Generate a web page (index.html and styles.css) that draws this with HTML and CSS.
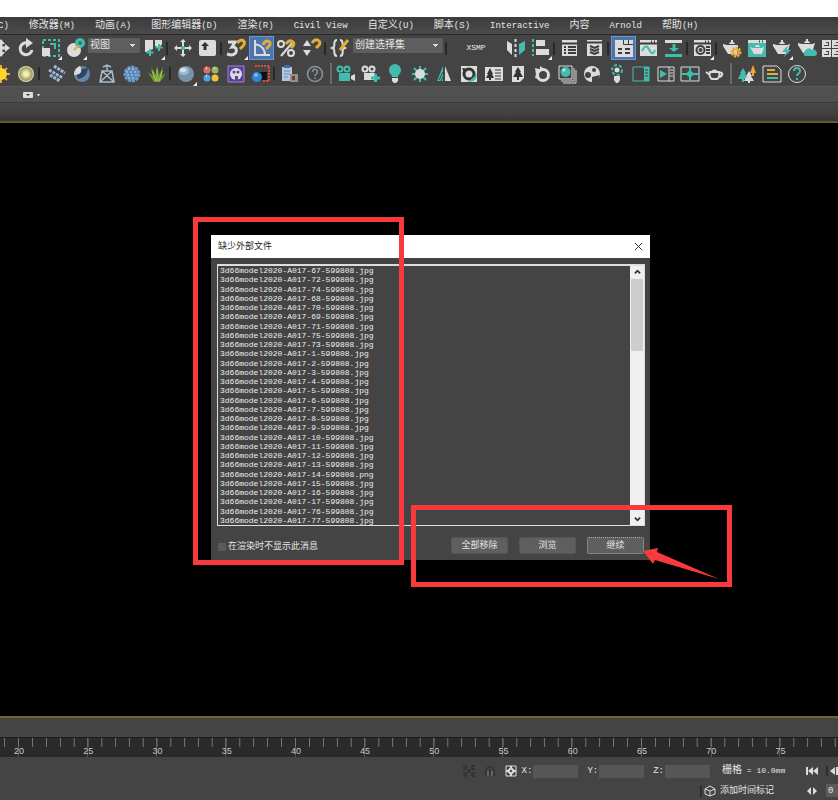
FILE: index.html
```html
<!DOCTYPE html>
<html lang="zh-CN">
<head>
<meta charset="utf-8">
<title>缺少外部文件</title>
<link rel="stylesheet" href="styles.css">
</head>
<body>
<nav class="menubar">
  <a href="#">C)</a>
  <a href="#"><span class="han">修改器</span>(M)</a>
  <a href="#"><span class="han">动画</span>(A)</a>
  <a href="#"><span class="han">图形编辑器</span>(D)</a>
  <a href="#"><span class="han">渲染</span>(R)</a>
  <a href="#">Civil View</a>
  <a href="#"><span class="han">自定义</span>(U)</a>
  <a href="#"><span class="han">脚本</span>(S)</a>
  <a href="#">Interactive</a>
  <a href="#"><span class="han">内容</span></a>
  <a href="#">Arnold</a>
  <a href="#"><span class="han">帮助</span>(H)</a>
</nav>

<div class="toolbar main-tools">
  <button class="tool" aria-label="Move"><svg viewBox="0 0 24 24"><path class="w" d="M12 3l4 5h-2.500v2.500H16V8l5 4-5 4v-2.500h-2.500V16H16l-4 5-4-5h2.500v-2.500H8V16l-5-4 5-4v2.500h2.500V8H8z"/></svg></button>
  <button class="tool" aria-label="Rotate"><svg viewBox="0 0 24 24"><path class="lw thick" d="M14 7a6 6 0 1 0 4 7"/><path class="w" d="M12 2l7 5-7 5z"/></svg></button>
  <button class="tool flyout" aria-label="Scale"><svg viewBox="0 0 24 24"><path class="lt dash" d="M4 4h16v16H4z"/><path class="w" d="M3 12h8v8H3z"/><path class="lt" d="M11 8h5v5"/></svg></button>
  <button class="tool flyout" aria-label="Place"><svg viewBox="0 0 24 24"><circle class="w" cx="10" cy="14" r="7"/><circle class="t" cx="16" cy="7" r="5"/><path class="ly" d="M10 14l5-5"/><circle cx="16" cy="7" r="2" fill="#2c7f78"/></svg></button>
  <select class="combo view" aria-label="Coordinate system"><option>视图</option></select>
  <button class="tool flyout" aria-label="Pivot"><svg viewBox="0 0 24 24"><path class="w" d="M3 4h8v9l-7 3H3zM13 4h7v4l-3 4-4-2z"/><path class="lt" d="M8 13v7M4.500 16.500h7M17 8v7M13.500 11.500h7"/></svg></button>
  <i class="sep"></i>
  <button class="tool" aria-label="Manipulate"><svg viewBox="0 0 24 24"><path class="lw" d="M12 4v16M4 12h16"/><path class="w" d="M9 6l3-3 3 3zM9 18l3 3 3-3zM6 9l-3 3 3 3zM18 9l3 3-3 3z"/><circle class="t" cx="12" cy="12" r="2"/></svg></button>
  <button class="tool" aria-label="Keyboard override"><svg viewBox="0 0 24 24"><rect class="w" x="3" y="4" width="17" height="16" rx="2"/><path d="M9 6l4 4h-2.500v4h-3v-4H5z" fill="#333"/></svg></button>
  <i class="sep"></i>
  <button class="tool flyout" aria-label="Snap"><svg viewBox="0 0 24 24"><path class="lw thick" d="M3 6h7l-3 5c6-1 6 8-1 8l-4-1"/><path class="ly thick" d="M12 7c5-6 10-1 6 3l-3 3"/></svg></button>
  <button class="tool active" aria-label="Angle snap"><svg viewBox="0 0 24 24"><path class="lw" d="M5 4v15h15M5 8c6 1 10 5 10 11"/><path class="ly thick" d="M13 9c3-7 10-3 6 1l-3 3"/></svg></button>
  <button class="tool" aria-label="Percent snap"><svg viewBox="0 0 24 24"><circle class="lw" cx="6" cy="8" r="3"/><circle class="lw" cx="16" cy="17" r="3"/><path class="lw" d="M17 7L6 20"/><path class="ly thick" d="M11 8c4-6 10-2 7 2l-2 2"/></svg></button>
  <button class="tool" aria-label="Spinner snap"><svg viewBox="0 0 24 24"><path class="w" d="M3 10l4-6 4 6zM3 14h8l-4 6z"/><path class="ly thick" d="M12 7c4-6 10-2 7 2l-3 3"/></svg></button>
  <i class="sep"></i>
  <button class="tool" aria-label="Edit named selections"><svg viewBox="0 0 24 24"><path class="lw" d="M8 4c-4 0-2 4-3 7l-2 1 2 1c1 3-1 7 3 7M11 4c4 0 2 4 3 7l2 1-2 1c-1 3 1 7-3 7"/><path class="ly thick" d="M19 4l-8 10"/></svg></button>
  <select class="combo sets" aria-label="Selection set"><option>创建选择集</option></select>
  <i class="sep"></i>
  <button class="xsmp">XSMP</button>
  <button class="tool" aria-label="Mirror"><svg viewBox="0 0 24 24"><path class="w" d="M3 5l5 3v11l-5-5z"/><path class="t" d="M21 5l-6 3v11l6-5z"/><path class="lw dash" d="M11.500 3v18"/></svg></button>
  <button class="tool flyout" aria-label="Align"><svg viewBox="0 0 24 24"><path class="lt dash" d="M4 3v17"/><path class="w" d="M7 4h9v6H7zM7 13h13v6H7z"/></svg></button>
  <i class="sep"></i>
  <button class="tool" aria-label="Layer explorer"><svg viewBox="0 0 24 24"><path class="w" d="M4 4h15v16H4z"/><path class="ld" d="M4 7.500h15M6 11h2m2 0h8M6 14h2m2 0h8M6 17h2m2 0h8"/></svg></button>
  <button class="tool" aria-label="Layers"><svg viewBox="0 0 24 24"><path class="w" d="M4 4h15v16H4z"/><path class="ld" d="M4 6.500h15M7 10l4.500 2 4.500-2M7 13l4.500 2 4.500-2M7 16l4.500 2 4.500-2"/></svg></button>
  <i class="sep"></i>
  <button class="tool active" aria-label="Ribbon"><svg viewBox="0 0 24 24"><path class="w" d="M3 4h18v17H3z"/><path class="ld thin" d="M11.500 4v4.500H21M16.500 4v4"/><path class="ld" d="M6 13h4m3 0h5M6 17h4m3 0h5"/></svg></button>
  <button class="tool" aria-label="Curve editor"><svg viewBox="0 0 24 24"><path class="w" d="M3 4h17v16H3z"/><path class="ld" d="M3 7.500h17M14 5.500h1m2 0h1"/><path class="lt" d="M5 15c4-8 6-4 8 0s4 2 5-1"/></svg></button>
  <button class="tool" aria-label="Schematic view"><svg viewBox="0 0 24 24"><path class="w" d="M3 4h17v3H3z"/><path class="t" d="M3 18h17v3H3zM10.500 8h3v4H17l-5 4-5-4h3.500z"/></svg></button>
  <i class="sep"></i>
  <button class="tool flyout" aria-label="Material editor"><svg viewBox="0 0 24 24"><path class="w" d="M3 4h17v16H3z"/><path class="ld" d="M3 7.500h17M14 5.500h1m2 0h1M15 11h4m-4 3h4m-4 3h4"/><circle class="ld" cx="9.500" cy="14" r="4"/><circle cx="9.500" cy="14" r="2" fill="#444"/></svg></button>
  <i class="sep"></i>
  <button class="tool" aria-label="Render setup"><svg viewBox="0 0 24 24"><path class="w" d="M3 8l4 1h11l-1 9H8l-5-8zM9 8c1-3 5-3 6 0zM11 4h2v2h-2z"/><circle cx="16" cy="16" r="4" fill="none" stroke="#e8ac35" stroke-width="3" stroke-dasharray="2 1"/><circle cx="16" cy="16" r="2.800" fill="none" stroke="#e8ac35" stroke-width="2"/></svg></button>
  <button class="tool" aria-label="Frame window"><svg viewBox="0 0 24 24"><path class="t" d="M3 4h18v17H3z"/><path class="w" d="M3 4h18v3H3zM5 11l3 1h9l2-1-2 7H9zM10 11c1-3 4-3 5 0z"/><path class="ld" d="M14 5.500h1m2 0h1"/></svg></button>
  <button class="tool flyout" aria-label="Render"><svg viewBox="0 0 24 24"><path class="w" d="M3 8l4 1h10l3-1-3 10H8l-5-8zM9 8c1-3 5-3 6 0zM11 4h2v2h-2z"/><path class="t" d="M18 9l-6 7h4l-2 5 7-7h-4z"/></svg></button>
  <button class="tool" aria-label="Cloud render"><svg viewBox="0 0 24 24"><path class="w" d="M3 7l4 1h10l3-1-3 10H8L3 9zM9 7c1-3 5-3 6 0zM11 3h2v2h-2z"/><path class="t" d="M10 20a3 3 0 0 1 0-5 4 4 0 0 1 7-1 3 3 0 0 1 3 6z"/></svg></button>
  <button class="tool" aria-label="Gallery"><svg viewBox="0 0 24 24"><path class="lw" d="M3 5h7v6H3zM13 5h7v6h-7zM3 14h7v6H3zM13 14h7v6h-7zM5 5v3h3M15 5v3h3M5 14v3h3M15 14v3h3"/></svg></button>
</div>

<div class="toolbar extra-tools">
  <button class="tool" aria-label="Sun"><svg viewBox="0 0 24 24"><path class="ly" d="M12 3v18M3 12h18M6 6l12 12M18 6L6 18"/><circle cx="12" cy="12" r="6" fill="#ffd52b"/></svg></button>
  <button class="tool" aria-label="Disc light"><svg viewBox="0 0 24 24"><circle cx="12" cy="12" r="8" fill="#d9d6a1"/><circle cx="12" cy="12" r="7" fill="#a6a36c"/><circle cx="12" cy="12" r="5" fill="#c9c58e"/><circle cx="12" cy="12" r="3" fill="#f1edc0"/></svg></button>
  <i class="sep wide"></i>
  <button class="tool" aria-label="Scatter"><svg viewBox="0 0 24 24"><g fill="none" stroke="#9fb9d8" stroke-width="3" stroke-dasharray="3 1"><path d="M4 8l14 8M9 4l11 7M5 13l10 6"/></g></svg></button>
  <button class="tool" aria-label="Shade"><svg viewBox="0 0 24 24"><circle cx="12" cy="12" r="8" fill="#6487a8"/><path d="M5 8l13-2c-1 7-4 10-10 11z" fill="#30485f"/><path class="w" d="M10 4c3 5 1 9-6 9 0-5 3-8 6-9z"/></svg></button>
  <button class="tool" aria-label="Tower"><svg viewBox="0 0 24 24"><path fill="none" stroke="#a9bccd" stroke-width="1.500" d="M12 3v5M8 5l4-2 4 2M7 9h10l2 11H5zM7 9l12 11M17 9L5 20"/></svg></button>
  <button class="tool" aria-label="Fur"><svg viewBox="0 0 24 24"><circle cx="12" cy="12" r="7" fill="#5b88b9"/><circle cx="12" cy="12" r="7" fill="none" stroke="#6f98c5" stroke-width="3" stroke-dasharray="3 1"/><path fill="none" stroke="#b7d0ea" stroke-dasharray="2 2" d="M8 7h8M6 10h11M7 13h11M8 16h8"/></svg></button>
  <button class="tool" aria-label="Grass"><svg viewBox="0 0 24 24"><path fill="#6f9d35" d="M9 20L3 10l5 4-2-9 5 8 1-10 2 10 4-8-1 9 4-3-6 9z"/><path fill="none" stroke="#a5cd52" d="M11 19L7 9M12 19V7M14 19l3-10"/></svg></button>
  <i class="sep"></i>
  <button class="tool flyout" aria-label="Sphere"><svg viewBox="0 0 24 24"><circle cx="12" cy="12" r="8" fill="#7892a8"/><ellipse cx="10" cy="9" rx="5" ry="4" fill="#a3b8c8"/><ellipse cx="9" cy="8" rx="3" ry="2" fill="#d5e1ea"/></svg></button>
  <button class="tool" aria-label="Colours"><svg viewBox="0 0 24 24"><circle cx="8" cy="8" r="3.500" fill="#e36c64"/><circle cx="16" cy="8" r="3.500" fill="#97b960"/><circle cx="8" cy="16" r="3.500" fill="#4da3e6"/><circle cx="16" cy="16" r="3.500" fill="#f2bf36"/><path class="lw" d="M7 6h1M15 6h1M7 14h1M15 14h1"/></svg></button>
  <button class="tool" aria-label="Palette"><svg viewBox="0 0 24 24"><path fill="#5b3f99" stroke="#9d86d0" d="M4 4h16v16H4z"/><circle class="w" cx="12" cy="12" r="6"/><g fill="#5b3f99"><circle cx="10" cy="10" r="1.500"/><circle cx="14" cy="10" r="1.500"/><path d="M11 14h3v4h-3z"/></g></svg></button>
  <button class="tool" aria-label="Region"><svg viewBox="0 0 24 24"><path fill="none" stroke="#d94b3f" stroke-width="2" stroke-dasharray="2 1" d="M6 4h14v15h-6"/><path fill="#111" d="M9 10h9v8H9z"/><circle cx="8" cy="15" r="5" fill="#2f86d8"/><circle cx="7" cy="13" r="2" fill="#77b6ee"/></svg></button>
  <i class="sep"></i>
  <button class="tool" aria-label="Copy"><svg viewBox="0 0 24 24"><path fill="#b5c7e0" d="M4 5h10v14H4z"/><path fill="#456ba3" d="M6 3h6v3H6z"/><path fill="none" stroke="#6688b6" d="M6 9h6M6 12h6M6 15h4"/><path fill="#a08b84" d="M12 12h8v8h-8z"/><path fill="#5f4843" d="M14 14h3v4h-3z"/></svg></button>
  <button class="tool" aria-label="Help"><svg viewBox="0 0 24 24"><g fill="none" stroke="#8b949c" stroke-width="1.500"><circle cx="12" cy="12" r="7.500"/><path d="M9.500 10c0-4 5-3 5 0 0 2-2.500 2-2.500 4M12 15.500V17"/></g></svg></button>
  <i class="sep light"></i>
  <div class="tool-group">
    <button class="tool" aria-label="Camera"><svg viewBox="0 0 24 24"><circle class="lt" cx="6" cy="7" r="2.500"/><circle class="lt" cx="13" cy="7" r="2.500"/><path class="t" d="M5 11h11v8H5z"/><path class="w" d="M17 14l4-2v7l-4-2z"/></svg></button>
    <button class="tool" aria-label="Add camera"><svg viewBox="0 0 24 24"><circle class="lw" cx="6" cy="7" r="2.500"/><circle class="lw" cx="13" cy="7" r="2.500"/><path class="w" d="M5 11h11v7H5z"/><path class="lt thick" d="M12 16h9M16.500 12v8"/></svg></button>
    <button class="tool" aria-label="Bulb"><svg viewBox="0 0 24 24"><path class="t" d="M9 15c0-3-3-3-3-7a6 6 0 0 1 12 0c0 4-3 4-3 7z"/><path class="w" d="M9 16h6v3l-2 2h-2l-2-2z"/></svg></button>
    <button class="tool" aria-label="Daylight"><svg viewBox="0 0 24 24"><path class="lt" d="M12 4v16M4 12h16M6 6l12 12M18 6L6 18"/><circle class="w" cx="12" cy="12" r="5"/></svg></button>
    <button class="tool" aria-label="Tree mirror"><svg viewBox="0 0 24 24"><path class="t" d="M11 4v15H5z"/><path class="w" d="M13 4l6 15h-6z"/><path class="ld thin" d="M7 18l4-8M9 19l2-4"/></svg></button>
    <button class="tool" aria-label="Ring render"><svg viewBox="0 0 24 24"><path class="w" d="M4 4h16v16H4z"/><circle cx="12" cy="12" r="5" fill="none" stroke="#333" stroke-width="3"/><path fill="#333" d="M5 6l7 1-5 4z"/><path class="t" d="M11 20l9-8c0 5-3 8-9 8z"/></svg></button>
    <button class="tool" aria-label="Tree list"><svg viewBox="0 0 24 24"><path class="w" d="M3 5h18v14H3z"/><path fill="#333" d="M8 6l3 6h-1l2 4H9v2H7v-2H4l2-4H5z"/><path class="ld thin" d="M13 8h6M13 11h6M13 14h6M13 17h6"/></svg></button>
    <button class="tool" aria-label="Tree page"><svg viewBox="0 0 24 24"><path class="w" d="M6 4h12v12l-4 4H6z"/><path fill="#333" d="M12 5l3 5h-1l3 5h-4v3h-2v-3H7l3-5H9z"/></svg></button>
    <button class="tool" aria-label="Ring"><svg viewBox="0 0 24 24"><circle cx="12" cy="13" r="5.500" fill="none" stroke="#ddd" stroke-width="3"/><path class="w" d="M4 6l8 2-7 5zM9 4l6 4-6 1zM5 12l3 5-4-1z"/></svg></button>
    <button class="tool" aria-label="Stack"><svg viewBox="0 0 24 24"><path class="lw thin" d="M4 4h13v13H4zM6 19h13V6M8 21h13V8"/><circle class="t" cx="10.500" cy="10" r="5"/><circle class="w" cx="9" cy="8" r="1.500"/></svg></button>
    <button class="tool" aria-label="Reel"><svg viewBox="0 0 24 24"><circle class="w" cx="12" cy="12" r="8"/><g fill="#444"><circle cx="8" cy="13" r="3"/><circle cx="14" cy="8" r="2"/><path d="M12 15l8-2-3 7h-5z"/></g></svg></button>
    <button class="tool" aria-label="Lamp"><svg viewBox="0 0 24 24"><circle class="lt dash" cx="12" cy="8" r="5"/><circle class="w" cx="12" cy="8" r="2.500"/><path class="w" d="M9 14h6v4l-2 3h-2l-2-3z"/></svg></button>
    <button class="tool" aria-label="Panel"><svg viewBox="0 0 24 24"><path class="lt thin" d="M4 5h16v14H4z"/><path class="t" d="M15 5h5v14h-5z"/><path class="ld thin" d="M16 8h3M16 11h3M16 14h3"/></svg></button>
    <button class="tool" aria-label="Play panel"><svg viewBox="0 0 24 24"><path class="lw thin" d="M4 5h16v14H4zM15 5v14M16 8h3M16 11h3M16 14h3"/><path class="t" d="M6 8l7 4-7 4z"/></svg></button>
    <button class="tool" aria-label="Grid"><svg viewBox="0 0 24 24"><path class="lw thin" d="M3 5h18v14H3z"/><path class="lt" d="M12 5v14M3 12h18"/><circle class="t" cx="12" cy="12" r="3"/></svg></button>
    <button class="tool" aria-label="Teapot"><svg viewBox="0 0 24 24"><path class="lw" d="M7 10h9c1 3 0 6-2 7H9c-2-1-3-4-2-7zM7 13l-4-3M16 11c5-2 4 4-1 4M9 10c1-2 4-2 5 0"/></svg></button>
  </div>
  <i class="sep light"></i>
  <button class="tool" aria-label="Forest"><svg viewBox="0 0 24 24"><path class="t" d="M8 6l3 5h-1l3 6H9v3H7v-3H3l3-6H5z"/><path fill="#e8ac35" d="M18 3l3 8h-2v3h-2v-3h-2z"/><path class="w" d="M14 9l3 5h-1l3 5h-4v2h-2v-2H9l3-5h-1z"/></svg></button>
  <button class="tool" aria-label="Script"><svg viewBox="0 0 24 24"><path class="lw thin" d="M3 4h14l4 4v12H3z"/><path class="lt" d="M7 16h11"/><path class="ly" d="M7 8h8M7 12h11"/></svg></button>
  <button class="tool" aria-label="About"><svg viewBox="0 0 24 24"><circle class="lw thin" cx="12" cy="12" r="8.500"/><path class="lt" d="M9 9c0-4 6-4 6 0 0 3-3 2-3 5M12 16v2"/></svg></button>
</div>

<div class="ribbon"><button class="ribbon-toggle" aria-label="Ribbon options"><svg viewBox="0 0 20 8"><rect class="w" x="1" y="1" width="10" height="6" rx="1"/><path d="M4 3h4L6 5z" fill="#333"/><path class="w" d="M15 3h3l-1 2h-1z"/></svg></button></div>
<div class="ribbon-body"></div>

<main class="viewport">
  <section class="dialog">
    <header class="titlebar">
      <h1>缺少外部文件</h1>
      <button class="close" aria-label="Close"><svg viewBox="0 0 10 10"><path d="M1 1l8 8M9 1L1 9" fill="none" stroke="#222"/></svg></button>
    </header>
    <div class="listbox">
      <ul>
        <li>3d66model2020-A017-67-599808.jpg</li>
        <li>3d66model2020-A017-72-599808.jpg</li>
        <li>3d66model2020-A017-74-599808.jpg</li>
        <li>3d66model2020-A017-68-599808.jpg</li>
        <li>3d66model2020-A017-70-599808.jpg</li>
        <li>3d66model2020-A017-69-599808.jpg</li>
        <li>3d66model2020-A017-71-599808.jpg</li>
        <li>3d66model2020-A017-75-599808.jpg</li>
        <li>3d66model2020-A017-73-599808.jpg</li>
        <li>3d66model2020-A017-1-599808.jpg</li>
        <li>3d66model2020-A017-2-599808.jpg</li>
        <li>3d66model2020-A017-3-599808.jpg</li>
        <li>3d66model2020-A017-4-599808.jpg</li>
        <li>3d66model2020-A017-5-599808.jpg</li>
        <li>3d66model2020-A017-6-599808.jpg</li>
        <li>3d66model2020-A017-7-599808.jpg</li>
        <li>3d66model2020-A017-8-599808.jpg</li>
        <li>3d66model2020-A017-9-599808.jpg</li>
        <li>3d66model2020-A017-10-599808.jpg</li>
        <li>3d66model2020-A017-11-599808.jpg</li>
        <li>3d66model2020-A017-12-599808.jpg</li>
        <li>3d66model2020-A017-13-599808.jpg</li>
        <li>3d66model2020-A017-14-599808.png</li>
        <li>3d66model2020-A017-15-599808.jpg</li>
        <li>3d66model2020-A017-16-599808.jpg</li>
        <li>3d66model2020-A017-17-599808.jpg</li>
        <li>3d66model2020-A017-76-599808.jpg</li>
        <li>3d66model2020-A017-77-599808.jpg</li>
      </ul>
      <div class="scrollbar">
        <button aria-label="Scroll up"><svg viewBox="0 0 8 8"><path d="M1 5l3-3 3 3" fill="none" stroke="#333" stroke-width="2"/></svg></button>
        <div class="thumb"></div>
        <button aria-label="Scroll down"><svg viewBox="0 0 8 8"><path d="M1 3l3 3 3-3" fill="none" stroke="#333" stroke-width="2"/></svg></button>
      </div>
    </div>
    <footer class="actions">
      <label><input type="checkbox">在渲染时不显示此消息</label>
      <button>全部移除</button>
      <button>浏览</button>
      <button class="focused">继续</button>
    </footer>
    <div class="mark mark-list"></div>
    <div class="mark mark-actions"></div>
    <svg class="arrow" viewBox="0 0 78 32"><path d="M0 4l15-3-1 4 62 27-64-19-2 4z" fill="#f83a3d"/></svg>
  </section>
</main>

<div class="time-slider"></div>
<div class="ruler">
  <span>20</span><span>25</span><span>30</span><span>35</span><span>40</span><span>45</span><span>50</span><span>55</span><span>60</span><span>65</span><span>70</span><span>75</span><span></span>
</div>

<footer class="status">
  <div class="status-row coords">
    <button class="mini" aria-label="Isolate"><svg viewBox="0 0 14 14"><path fill="none" stroke="#252525" d="M1 2h3v3H1M13 2h-3v3h3M1 12h3V9H1M13 12h-3V9h3M5 5l4 4M9 5L5 9"/></svg></button>
    <button class="mini" aria-label="Lock"><svg viewBox="0 0 14 14"><path fill="none" stroke="#292929" d="M3 12V6l2-3h4l2 3v6M7 5v7"/><path stroke="#888" d="M5 7v5M9 7v5"/></svg></button>
    <button class="mini" aria-label="Absolute mode"><svg viewBox="0 0 14 14"><path class="lw thin" d="M2 2h10v10H2z"/><path class="lw" d="M7 4l3 3-3 3-3-3zM7 2v2M7 10v2M2 7h2M10 7h2"/></svg></button>
    <label>X:<input type="text"></label>
    <label>Y:<input type="text"></label>
    <label>Z:<input type="text"></label>
    <span class="grid-size"><span class="han">栅格</span> = 10.0mm</span>
    <div class="transport">
      <button aria-label="Go to start"><svg viewBox="0 0 12 10"><path class="w" d="M0 1h2v8H0zM7 1v8L2 5zM12 1v8L7 5z"/></svg></button>
      <button aria-label="Previous frame"><svg viewBox="0 0 12 10"><path class="w" d="M5 1v8L0 5zM6 1h2v8H6zM9 1h2v8H9z"/></svg></button>
    </div>
  </div>
  <div class="status-row">
    <button class="time-tag"><svg viewBox="0 0 12 12"><path class="lw thin" d="M6 1l5 3v5l-5 2-5-2V4zM1 4l5 2 5-2M6 6v5"/></svg>添加时间标记</button>
    <div class="transport">
      <button aria-label="Key mode"><svg viewBox="0 0 12 10"><path class="w" d="M5 1v8L1 5zM7 1v8l4-4z"/></svg></button>
      <input class="frame" type="text" value="0" aria-label="Frame">
    </div>
  </div>
</footer>
</body>
</html>
```

FILE: styles.css
```css
* { box-sizing: border-box; }

body {
  margin: 0;
  min-height: 100vh;
  padding-top: 17px;
  display: flex;
  flex-direction: column;
  overflow: hidden;
  background: #fff;
  color: #e4e4e4;
  font: 9px/12px "Liberation Mono", "Noto Sans CJK SC", monospace;
}

button, input, select {
  margin: 0;
  padding: 0;
  border: 0;
  background: none;
  color: inherit;
  font: inherit;
}

svg { display: block; }
.han { font-size: 10px; }

/* icon paint */
.w { fill: #dcdcdc; }
.t { fill: #42bcae; }
.lw, .lt, .ly, .ld { fill: none; stroke-width: 2; }
.lw { stroke: #dcdcdc; }
.lt { stroke: #42bcae; }
.ly { stroke: #e3ad36; }
.ld { stroke: #3c3c3c; }
.thick { stroke-width: 3; }
.thin { stroke-width: 1; }
.dash { stroke-dasharray: 3 2; }

.menubar {
  display: flex;
  align-items: center;
  gap: 20px;
  height: 18px;
  background: linear-gradient(#3c3c3c, #4b4b4b);
  border-bottom: 1px solid #292929;
  white-space: nowrap;
}
.menubar a { color: inherit; text-decoration: none; }
.menubar a:first-child { margin-left: -2px; }

.toolbar {
  display: flex;
  align-items: center;
  background: #444;
  overflow: hidden;
}
.main-tools { height: 26px; }
.extra-tools { height: 25px; }
.toolbar > * { flex: none; }
.toolbar > :first-child { margin-left: -12px; }

.tool {
  display: grid;
  place-items: center;
  width: 25px;
  height: 24px;
  position: relative;
}
.tool svg { width: 24px; height: 24px; }
.tool.active {
  background: #4c74ae;
  outline: 1px solid #6b94d0;
  outline-offset: -1px;
}
.flyout::after {
  content: "";
  position: absolute;
  right: 1px;
  bottom: 0;
  border-left: 4px solid transparent;
  border-bottom: 4px solid #eee;
}
.tool-group {
  display: flex;
  justify-content: space-between;
  width: 393px;
}
.tool-group .tool { width: 24px; }

.sep { width: 4px; height: 13px; border-left: 2px solid #282828; }
.sep.wide { width: 6px; }
.sep.light { width: 4px; height: 21px; margin-left: 3px; border-color: #6a6a6a; }

.combo {
  appearance: none;
  height: 15px;
  align-self: flex-start;
  margin-top: 3px;
  padding: 0 2px;
  font-size: 10px;
  line-height: 15px;
  border-radius: 1px;
  background: linear-gradient(#ddd, #ddd) no-repeat right 5px top 6px / 5px 1px,
    linear-gradient(#ddd, #ddd) no-repeat right 6px top 7px / 3px 1px,
    linear-gradient(#ddd, #ddd) no-repeat right 7px top 8px / 1px 1px,
    #5e5e5e;
}
.view { width: 52px; margin-right: 1px; }
.sets { width: 90px; margin-right: 2px; }
.xsmp { width: 54px; font-size: 8px; }

.ribbon {
  height: 16px;
  display: flex;
  align-items: center;
  padding-left: 22px;
  background: #505050;
  border-top: 1px solid #595959;
}
.ribbon-toggle svg { width: 20px; height: 8px; }
.ribbon-body {
  height: 19px;
  background: linear-gradient(#474747, #3e3e3e);
  border-top: 1px solid #3a3a3a;
  border-bottom: 4px solid #383838;
}

.viewport {
  flex: 1;
  position: relative;
  min-height: 480px;
  background: #000;
  border-top: 2px solid #625a27;
  border-bottom: 2px solid #6f652c;
}

.dialog {
  position: absolute;
  left: 211px;
  top: 112px;
  width: 439px;
  background: #444;
}
.titlebar {
  display: flex;
  align-items: center;
  justify-content: space-between;
  height: 23px;
  padding: 0 7px;
  background: #fff;
  color: #222;
}
.titlebar h1 { margin: 0; font-size: 9px; font-weight: 400; }
.close svg { width: 9px; height: 9px; }

.listbox {
  display: flex;
  height: 262px;
  margin: 6px 5px 1px 6px;
  border: 1px solid #ddd;
  border-top-width: 2px;
}
.listbox ul {
  flex: 1;
  display: grid;
  grid-auto-rows: 1fr;
  margin: 0;
  padding: 0 0 0 2px;
  list-style: none;
  font-size: 8px;
  line-height: 9px;
  color: #eee;
}
.scrollbar {
  display: flex;
  flex-direction: column;
  width: 14px;
  background: #f0f0f0;
}
.scrollbar button {
  display: grid;
  place-items: center;
  height: 13px;
}
.scrollbar svg { width: 7px; height: 7px; }
.scrollbar button:last-child { margin-top: auto; }
.thumb { height: 72px; margin: 0 1px; background: #cdcdcd; }

.actions {
  display: flex;
  align-items: center;
  gap: 11px;
  height: 33px;
  padding: 4px 6px 0 7px;
  line-height: 14px;
}
.actions label {
  display: flex;
  align-items: center;
  gap: 2px;
  margin-right: auto;
  padding-top: 3px;
}
.actions input {
  appearance: none;
  width: 8px;
  height: 8px;
  background: #5a5a5a;
}
.actions button {
  width: 57px;
  height: 17px;
  border: 1px solid #555;
  border-radius: 2px;
  background: #5f5f5f;
}
.actions .focused { border: 1px dotted #aaa; }

.mark { position: absolute; border: 5px solid #f83a3d; pointer-events: none; }
.mark-list { left: -18px; top: -18px; width: 211px; height: 348px; }
.mark-actions { left: 200px; top: 270px; width: 321px; height: 82px; }
.arrow { position: absolute; left: 432px; top: 312px; width: 78px; height: 32px; }

.time-slider { height: 19px; background: #444; }
.ruler {
  display: flex;
  height: 20px;
  background: #2a2a2a;
  border-top: 1px solid #1c1c1c;
  overflow: hidden;
}
.ruler span {
  flex: 0 0 8.26%;
  padding-top: 8px;
  text-align: center;
  font: 9px/11px "Liberation Sans", sans-serif;
  color: #c8c8c8;
  background:
    linear-gradient(90deg, transparent calc(50% - 1px), #777 calc(50% - 1px), #777 50%, transparent 50%) 0 0 / 20% 9px repeat-x,
    linear-gradient(90deg, transparent calc(50% - 1px), #555 calc(50% - 1px), #555 50%, transparent 50%);
}
.ruler span:first-child { margin-left: -1.86%; }

.status { height: 43px; padding-top: 2px; background: #444; overflow: hidden; }
.status-row {
  display: flex;
  align-items: center;
  justify-content: flex-end;
  height: 15px;
}
.status-row.coords { height: 24px; }
.mini { width: 21px; display: grid; place-items: center; }
.mini svg { width: 14px; height: 14px; }
.coords label { display: flex; align-items: center; margin-right: 9px; }
.coords label input {
  width: 45px;
  height: 13px;
  margin-left: 1px;
  background: #565656;
}
.grid-size { width: 87px; padding-left: 3px; font-size: 8px; white-space: nowrap; }
.transport { display: flex; align-items: center; width: 32px; }
.transport svg { width: 12px; height: 10px; }
.transport button { flex: none; width: 20px; }
.transport button + button { border-left: 2px solid #2c2c2c; padding-left: 2px; width: 14px; }
.time-tag {
  display: flex;
  align-items: center;
  gap: 4px;
  width: 106px;
  padding-left: 2px;
  border-left: 2px solid #2c2c2c;
  font-size: 9px;
  white-space: nowrap;
}
.time-tag svg { width: 12px; height: 12px; }
.frame { width: 14px; height: 13px; padding-left: 2px; background: #5a5a5a; }
```
